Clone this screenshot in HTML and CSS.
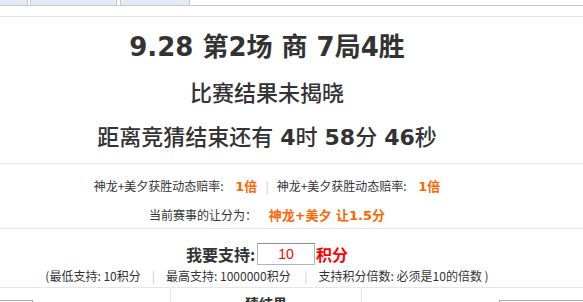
FILE: index.html
```html
<!DOCTYPE html>
<html lang="zh-CN">
<head>
    <meta charset="UTF-8">
    <meta name="viewport" content="width=device-width, initial-scale=1.0">
    <title>竞猜详情</title>
    <link rel="stylesheet" href="styles.css">
</head>
<body>
    <div class="tabs">
        <span class="tab tab-first"></span>
        <span class="tab tab-second"></span>
        <span class="tab tab-third"></span>
    </div>
    <div class="spacer"></div>

    <div class="section head">
        <div class="inner">
            <h1 class="title">9.28 第2场 商 7局4胜</h1>
            <p class="status">比赛结果未揭晓</p>
            <p class="countdown">距离竞猜结束还有 <b>4</b>时 <b>58</b>分 <b>46</b>秒</p>
        </div>
    </div>

    <div class="section odds">
        <div class="inner">
            <p class="odds-row">神龙+美夕获胜动态赔率: <span class="hl">1倍</span><span class="sep">|</span>神龙+美夕获胜动态赔率: <span class="hl">1倍</span></p>
            <p class="odds-row">当前赛事的让分为： <span class="hl">神龙+美夕 让1.5分</span></p>
        </div>
    </div>

    <div class="section bet">
        <div class="inner">
            <div class="bet-row">
                <label for="bet-points">我要支持:</label>
                <input type="text" id="bet-points" value="10">
                <span class="unit">积分</span>
            </div>
            <p class="note">(最低支持: 10积分<span class="sep">|</span>最高支持: 1000000积分 <span class="sep">|</span>支持积分倍数: 必须是10的倍数 )</p>
        </div>
    </div>

    <div class="result-grid">
        <div class="col col-left">
            <div class="box box-left"></div>
        </div>
        <div class="col col-mid">
            <div class="col-title">猜结果</div>
        </div>
        <div class="col col-right">
            <div class="box box-right"></div>
        </div>
    </div>
</body>
</html>
```

FILE: styles.css
```css
body {
    margin: 0;
    background-color: #fff;
    color: #333;
    font-family: "Noto Sans CJK SC", sans-serif;
    overflow: hidden;
}
p, h1 {
    margin: 0;
}

/* top tab strip (mostly scrolled out of view) */
.tabs {
    display: flex;
    height: 5px;
    border-bottom: 1px solid #c8c8c8;
}
.tab {
    background-color: #e4ebf4;
    border: 1px solid #c8c8c8;
    border-top: none;
    border-bottom: none;
}
.tab-first {
    width: 27px;
    border-left: none;
}
.tab-second {
    width: 85px;
    margin-left: 2px;
}
.tab-third {
    width: 68px;
    margin-left: 3px;
}
.spacer {
    height: 10px;
    border-bottom: 1px solid #e5e5dc;
}

.section {
    border-bottom: 1px solid #e6e6e3;
}
.inner {
    width: 534px;
    text-align: center;
}

/* match header */
.head {
    height: 146px;
}
.head .inner {
    padding-top: 10px;
}
.title {
    font-family: "DejaVu Sans", "Noto Sans CJK SC", sans-serif;
    font-size: 26px;
    font-weight: bold;
    line-height: 40px;
    color: #333;
}
.status, .countdown {
    font-family: "DejaVu Sans", "Noto Sans CJK SC", sans-serif;
    font-size: 22px;
    font-weight: 500;
    line-height: 44px;
    color: #333;
}
.status {
    margin-top: 5px;
}
.countdown b {
    font-weight: bold;
}

/* odds */
.odds {
    height: 64px;
    border-bottom-color: #e5e5dc;
}
.odds .inner {
    padding-top: 8px;
}
.odds-row {
    font-size: 12px;
    line-height: 28px;
    color: #333;
}
.hl {
    font-family: "DejaVu Sans", "Noto Sans CJK SC", sans-serif;
    font-size: 13px;
    font-weight: bold;
    color: #ff6600;
    margin-left: 9px;
}
.sep {
    color: #ccc;
    margin: 0 8px;
}

/* bet input */
.bet {
    height: 58px;
}
.bet .inner {
    padding-top: 12px;
}
.bet-row {
    display: flex;
    justify-content: center;
    align-items: center;
    height: 26px;
}
.bet-row label {
    font-size: 16px;
    font-weight: bold;
    color: #333;
}
.bet-row input {
    width: 56px;
    height: 20px;
    padding: 0;
    margin: 0 1px 0 2px;
    border: 1px solid #b4b4b4;
    border-top-color: #8c8c8c;
    text-align: center;
    font-family: "Liberation Sans", sans-serif;
    font-size: 14px;
    color: #ff0000;
}
.unit {
    font-size: 16px;
    font-weight: bold;
    color: #ff0000;
}
.note {
    font-size: 12px;
    line-height: 18px;
    color: #333;
}
.note .sep {
    margin: 0 11px;
}

/* results table */
.result-grid {
    display: grid;
    grid-template-columns: 171px 191px 1fr;
    height: 40px;
}
.col {
    border-right: 1px solid #e6e6e6;
}
.col-right {
    border-right: none;
}
.col-title {
    text-align: center;
    font-size: 14px;
    font-weight: bold;
    line-height: 20px;
    padding-top: 5px;
    color: #333;
}
.box {
    height: 30px;
    margin-top: 12px;
    border: 1px solid #a6a6a6;
    background-color: #fff;
}
.box-left {
    width: 32px;
    border-left: none;
}
.box-right {
    margin-left: 137px;
    border-right: none;
}
```
